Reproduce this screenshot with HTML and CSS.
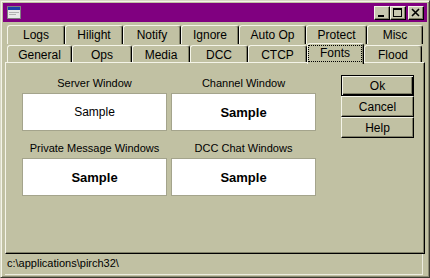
FILE: index.html
```html
<!DOCTYPE html>
<html lang="en">
<head>
    <meta charset="UTF-8">
    <title>Options</title>
    <link rel="stylesheet" href="styles.css">
</head>
<body>
    <div class="window">
        <div class="titlebar">
            <svg class="app-icon" width="14" height="13" viewBox="0 0 14 13">
                <rect x="0.5" y="0.5" width="13" height="12" fill="#e8e8e8" stroke="#808080"/>
                <rect x="1" y="1" width="12" height="3" fill="#1c3fa8"/>
                <rect x="2" y="6" width="10" height="1" fill="#b0b0b0"/>
                <rect x="2" y="8" width="7" height="1" fill="#b0b0b0"/>
            </svg>
            <div class="caption-buttons">
                <button class="cap-btn">
                    <svg width="10" height="10" viewBox="0 0 10 10"><rect x="1" y="7" width="6" height="2" fill="#000"/></svg>
                </button>
                <button class="cap-btn">
                    <svg width="10" height="10" viewBox="0 0 10 10"><rect x="0.5" y="0.5" width="8" height="8" fill="none" stroke="#000"/><rect x="0" y="0" width="9" height="2" fill="#000"/></svg>
                </button>
                <button class="cap-btn close">
                    <svg width="10" height="10" viewBox="0 0 10 10"><path d="M1 1 L8 8 M8 1 L1 8" stroke="#000" stroke-width="1.6"/></svg>
                </button>
            </div>
        </div>

        <div class="client">
            <div class="tab-row back">
                <div class="tab">Logs</div>
                <div class="tab">Hilight</div>
                <div class="tab">Notify</div>
                <div class="tab">Ignore</div>
                <div class="tab w67">Auto Op</div>
                <div class="tab w61">Protect</div>
                <div class="tab w56">Misc</div>
            </div>
            <div class="tab-row front">
                <div class="tab w65">General</div>
                <div class="tab w60">Ops</div>
                <div class="tab">Media</div>
                <div class="tab">DCC</div>
                <div class="tab w59">CTCP</div>
                <div class="tab w57 selected"><span class="focus">Fonts</span></div>
                <div class="tab">Flood</div>
            </div>

            <div class="panel">
                <div class="font-grid">
                    <div class="font-item">
                        <div class="font-label">Server Window</div>
                        <div class="sample plain">Sample</div>
                    </div>
                    <div class="font-item">
                        <div class="font-label">Channel Window</div>
                        <div class="sample">Sample</div>
                    </div>
                    <div class="font-item">
                        <div class="font-label">Private Message Windows</div>
                        <div class="sample">Sample</div>
                    </div>
                    <div class="font-item">
                        <div class="font-label">DCC Chat Windows</div>
                        <div class="sample">Sample</div>
                    </div>
                </div>
                <div class="actions">
                    <button class="btn default">Ok</button>
                    <button class="btn">Cancel</button>
                    <button class="btn">Help</button>
                </div>
            </div>

            <div class="statusbar">c:\applications\pirch32\</div>
        </div>
    </div>
</body>
</html>
```

FILE: styles.css
```css
body {
    margin: 0;
    padding: 0;
    background: #c1c1a3;
    font-family: 'Liberation Sans', Arial, sans-serif;
    font-size: 11px;
    color: #000;
}
.window {
    width: 430px;
    height: 278px;
    box-sizing: border-box;
    border: 1px solid;
    border-color: #d8d8c4 #3c3c30 #3c3c30 #d8d8c4;
    box-shadow: inset 1px 1px 0 #f4f4e8, inset -1px -1px 0 #8a8a74;
    padding: 2px;
    background: #c1c1a3;
    display: flex;
    flex-direction: column;
}
.titlebar {
    height: 19px;
    flex: none;
    background: #800080;
    display: flex;
    align-items: center;
    justify-content: space-between;
    padding: 0 3px 0 4px;
}
.app-icon {
    display: block;
}
.caption-buttons {
    display: flex;
    align-items: center;
}
.cap-btn {
    width: 16px;
    height: 14px;
    padding: 0;
    margin: 0;
    background: #c8c8b0;
    border: 1px solid;
    border-color: #f4f4e8 #000 #000 #f4f4e8;
    box-shadow: inset -1px -1px 0 #808068;
    display: flex;
    align-items: center;
    justify-content: center;
}
.cap-btn.close {
    margin-left: 2px;
}
.client {
    flex: 1;
    display: flex;
    flex-direction: column;
    padding: 2px 2px 0 2px;
}
.tab-row {
    display: flex;
    padding-left: 2px;
    flex: none;
}
.tab-row.back {
    height: 20px;
}
.tab-row.front {
    height: 18px;
    position: relative;
    z-index: 1;
}
.tab {
    width: 58px;
    box-sizing: border-box;
    border-top: 1px solid #f4f4e8;
    border-left: 1px solid #f4f4e8;
    border-right: 1px solid #000;
    border-radius: 3px 3px 0 0;
    box-shadow: inset -1px 0 0 #808068;
    text-align: center;
    font-size: 12px;
    line-height: 16px;
    padding-top: 1px;
    color: #000;
}
.back .tab {
    margin-top: 1px;
}
.front .tab {
    margin-top: 1px;
}
.tab.w67 { width: 67px; }
.tab.w61 { width: 61px; }
.tab.w56 { width: 56px; }
.tab.w65 { width: 65px; }
.tab.w60 { width: 60px; }
.tab.w59 { width: 59px; }
.tab.w57 { width: 57px; }
.tab.selected {
    margin-top: -1px;
    height: 21px;
    padding-top: 0;
    background: #c1c1a3;
}
.focus {
    display: block;
    margin: 1px 1px 0 0;
    height: 15px;
    line-height: 15px;
    border: 1px dotted #000;
}
.panel {
    flex: 1;
    display: flex;
    align-items: flex-start;
    border-top: 1px solid #f4f4e8;
    border-left: 1px solid #f4f4e8;
    border-right: 1px solid #000;
    border-bottom: 1px solid #000;
    box-shadow: inset -1px -1px 0 #808068;
    padding: 12px 0 0 16px;
}
.font-grid {
    display: grid;
    grid-template-columns: 145px 145px;
    column-gap: 4px;
    row-gap: 11px;
    margin-top: 2px;
}
.font-label {
    text-align: center;
    line-height: 13px;
    margin-bottom: 3px;
}
.sample {
    height: 38px;
    box-sizing: border-box;
    background: #fff;
    border: 1px solid #a4a48c;
    display: flex;
    align-items: center;
    justify-content: center;
    font-size: 13px;
    font-weight: bold;
}
.sample.plain {
    font-size: 12px;
    font-weight: normal;
}
.actions {
    display: flex;
    flex-direction: column;
    margin-left: 25px;
}
.btn {
    width: 73px;
    height: 21px;
    margin: 0;
    padding: 0;
    box-sizing: border-box;
    background: #c1c1a3;
    border: 1px solid;
    border-color: #f4f4e8 #000 #000 #f4f4e8;
    box-shadow: inset -1px -1px 0 #808068;
    font-family: 'Liberation Sans', Arial, sans-serif;
    font-size: 12px;
    color: #000;
}
.btn.default {
    border: 1px solid #000;
    box-shadow: inset 1px 1px 0 #f4f4e8, inset -1px -1px 0 #000, inset -2px -2px 0 #808068;
}
.statusbar {
    height: 21px;
    flex: none;
    box-sizing: border-box;
    padding-left: 2px;
    line-height: 19px;
    border-right: 1px solid #ecece0;
    border-bottom: 1px solid #ecece0;
    margin-right: 2px;
}
```
